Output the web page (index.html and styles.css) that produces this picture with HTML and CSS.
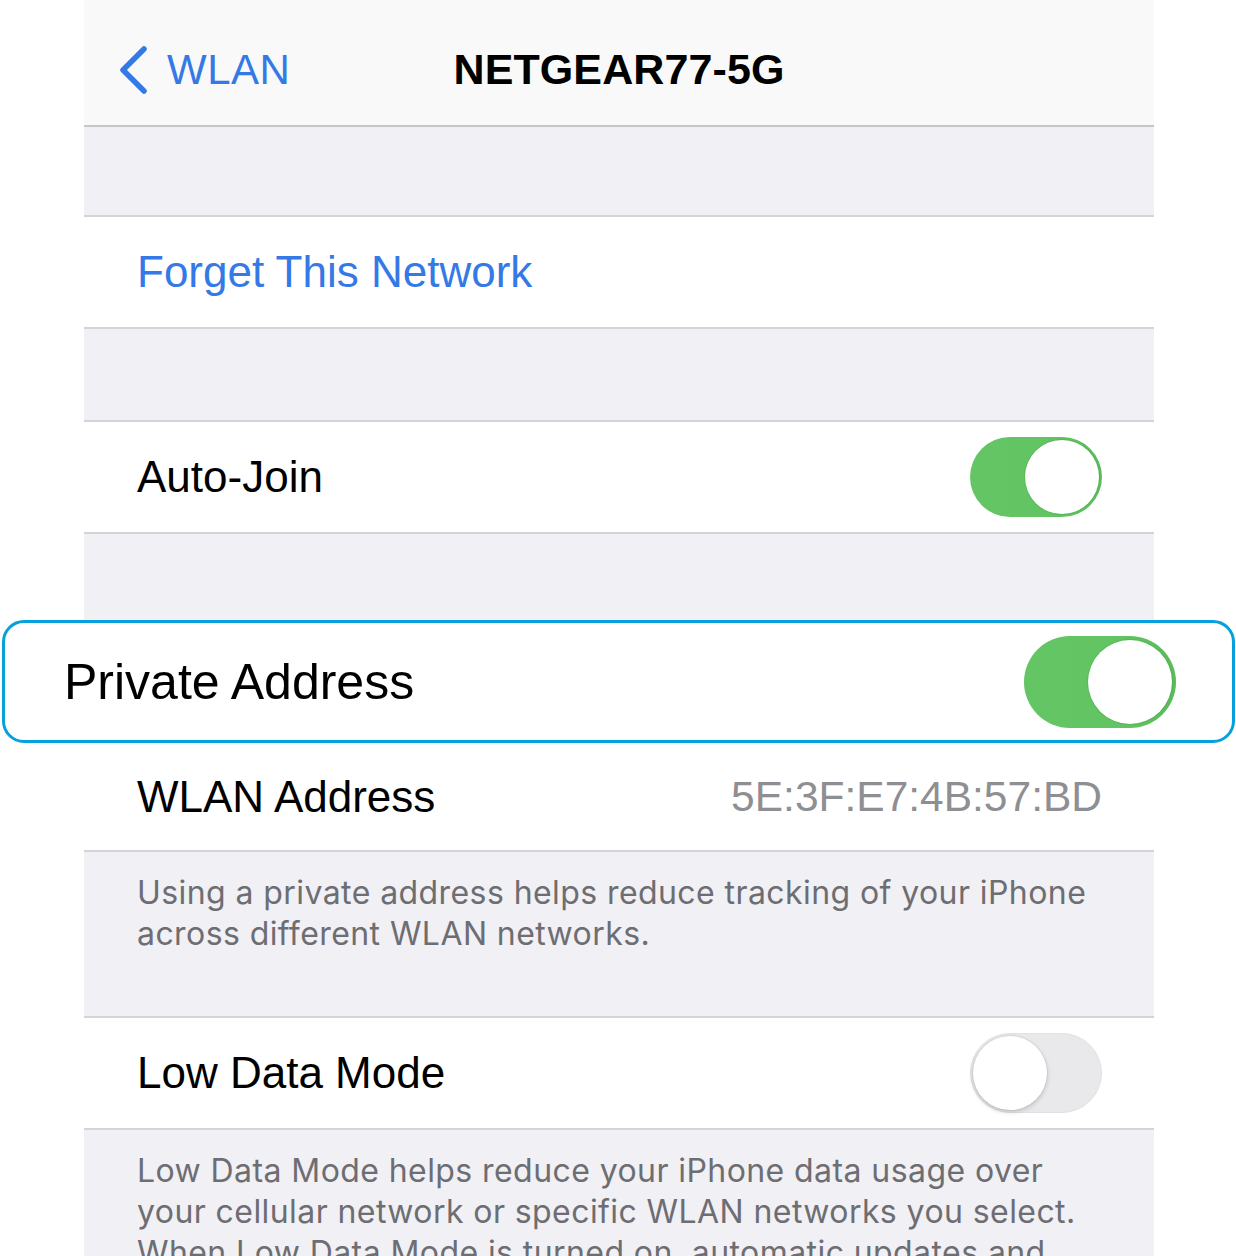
FILE: index.html
```html
<!DOCTYPE html>
<html lang="en">
<head>
<meta charset="utf-8">
<title>NETGEAR77-5G</title>
<link rel="stylesheet" href="styles.css">
</head>
<body>
<div class="panel">
  <header class="nav">
    <div class="back">
      <svg class="chev" width="32" height="48" viewBox="0 0 32 48" aria-hidden="true">
        <path d="M27 3 L6 24 L27 45" fill="none" stroke="#3479e6" stroke-width="5.5" stroke-linecap="round" stroke-linejoin="round"/>
      </svg>
      <span class="back-label">WLAN</span>
    </div>
    <div class="title">NETGEAR77-5G</div>
    <div></div>
  </header>

  <div class="spacer s1"></div>
  <div class="row">
    <span class="link">Forget This Network</span>
  </div>

  <div class="spacer s2"></div>
  <div class="row">
    <span class="label">Auto-Join</span>
    <div class="switch on"><div class="knob"></div></div>
  </div>

  <div class="spacer s3"></div>
  <div class="callout">
    <span class="label big">Private Address</span>
    <div class="switch on big"><div class="knob"></div></div>
  </div>

  <div class="row no-top short">
    <span class="label">WLAN Address</span>
    <span class="value">5E:3F:E7:4B:57:BD</span>
  </div>
  <div class="note n1">Using a private address helps reduce tracking of your iPhone<br>across different WLAN networks.</div>

  <div class="row">
    <span class="label">Low Data Mode</span>
    <div class="switch off"><div class="knob"></div></div>
  </div>
  <div class="note n2">Low Data Mode helps reduce your iPhone data usage over<br>your cellular network or specific WLAN networks you select.<br>When Low Data Mode is turned on, automatic updates and</div>
</div>
</body>
</html>
```

FILE: styles.css
```css
html, body {
  margin: 0;
  padding: 0;
  background: #ffffff;
}
body {
  height: 1256px;
  overflow: hidden;
  font-family: "Liberation Sans", Arial, sans-serif;
  color: #000;
}
.panel {
  margin-left: 84px;
  width: 1070px;
  background: #f0f0f5;
  min-height: 1256px;
}
.nav {
  background: #f9f9f9;
  border-bottom: 2px solid #c6c6c9;
  display: grid;
  grid-template-columns: 1fr auto 1fr;
  align-items: center;
  padding-top: 14px;
  height: 111px;
}
.back {
  display: flex;
  align-items: center;
  padding-left: 33px;
}
.chev {
  display: block;
}
.back-label {
  margin-left: 18px;
  color: #3479e6;
  font-size: 42px;
  letter-spacing: 0.5px;
}
.title {
  font-size: 43px;
  font-weight: bold;
  letter-spacing: 0.1px;
}
.spacer.s1 { height: 88px; }
.spacer.s2 { height: 91px; }
.spacer.s3 { height: 86px; }

.row {
  background: #fff;
  border-top: 2px solid #d4d4d8;
  border-bottom: 2px solid #d4d4d8;
  height: 110px;
  display: flex;
  align-items: center;
  justify-content: space-between;
  padding: 0 52px 0 53px;
}
.row.no-top {
  border-top: 0;
}
.row.short {
  height: 107px;
}
.link {
  color: #3479e6;
  font-size: 44px;
}
.label {
  font-size: 44px;
}
.label.big {
  font-size: 50px;
}
.value {
  color: #8e8e93;
  font-size: 42.5px;
}
.callout {
  position: relative;
  z-index: 1;
  margin: 0 -81px 0 -82px;
  height: 117px;
  background: #fff;
  border: 3px solid #06a0de;
  border-radius: 22px;
  display: flex;
  align-items: center;
  justify-content: space-between;
  padding: 0 56px 0 59px;
}
.note {
  color: #6d6d72;
  font-family: "Inter", "Liberation Sans", sans-serif;
  font-size: 32px;
  line-height: 41px;
  letter-spacing: 0.42px;
  padding: 20px 40px 0 53px;
  white-space: nowrap;
}
.note.n1 {
  height: 144px;
}
.switch {
  width: 132px;
  height: 80px;
  border-radius: 40px;
  box-sizing: border-box;
  padding: 3px;
  display: flex;
  align-items: center;
}
.switch.on {
  background: linear-gradient(90deg, #64c565 0%, #62c462 60%, #5bbb5c 100%);
  justify-content: flex-end;
}
.switch.off {
  background: #e9e9eb;
  border: 1px solid #e1e1e4;
  justify-content: flex-start;
  padding: 2px;
}
.knob {
  width: 74px;
  height: 74px;
  border-radius: 50%;
  background: #fff;
}
.switch.on .knob {
  box-shadow: 0 0 0 1px rgba(60, 150, 60, 0.25);
}
.switch.off .knob {
  box-shadow: 0 2px 5px rgba(0, 0, 0, 0.18), 0 0 0 1px rgba(0, 0, 0, 0.05);
}
.switch.big {
  width: 152px;
  height: 92px;
  border-radius: 46px;
  padding: 4px;
}
.switch.big .knob {
  width: 84px;
  height: 84px;
}
```
